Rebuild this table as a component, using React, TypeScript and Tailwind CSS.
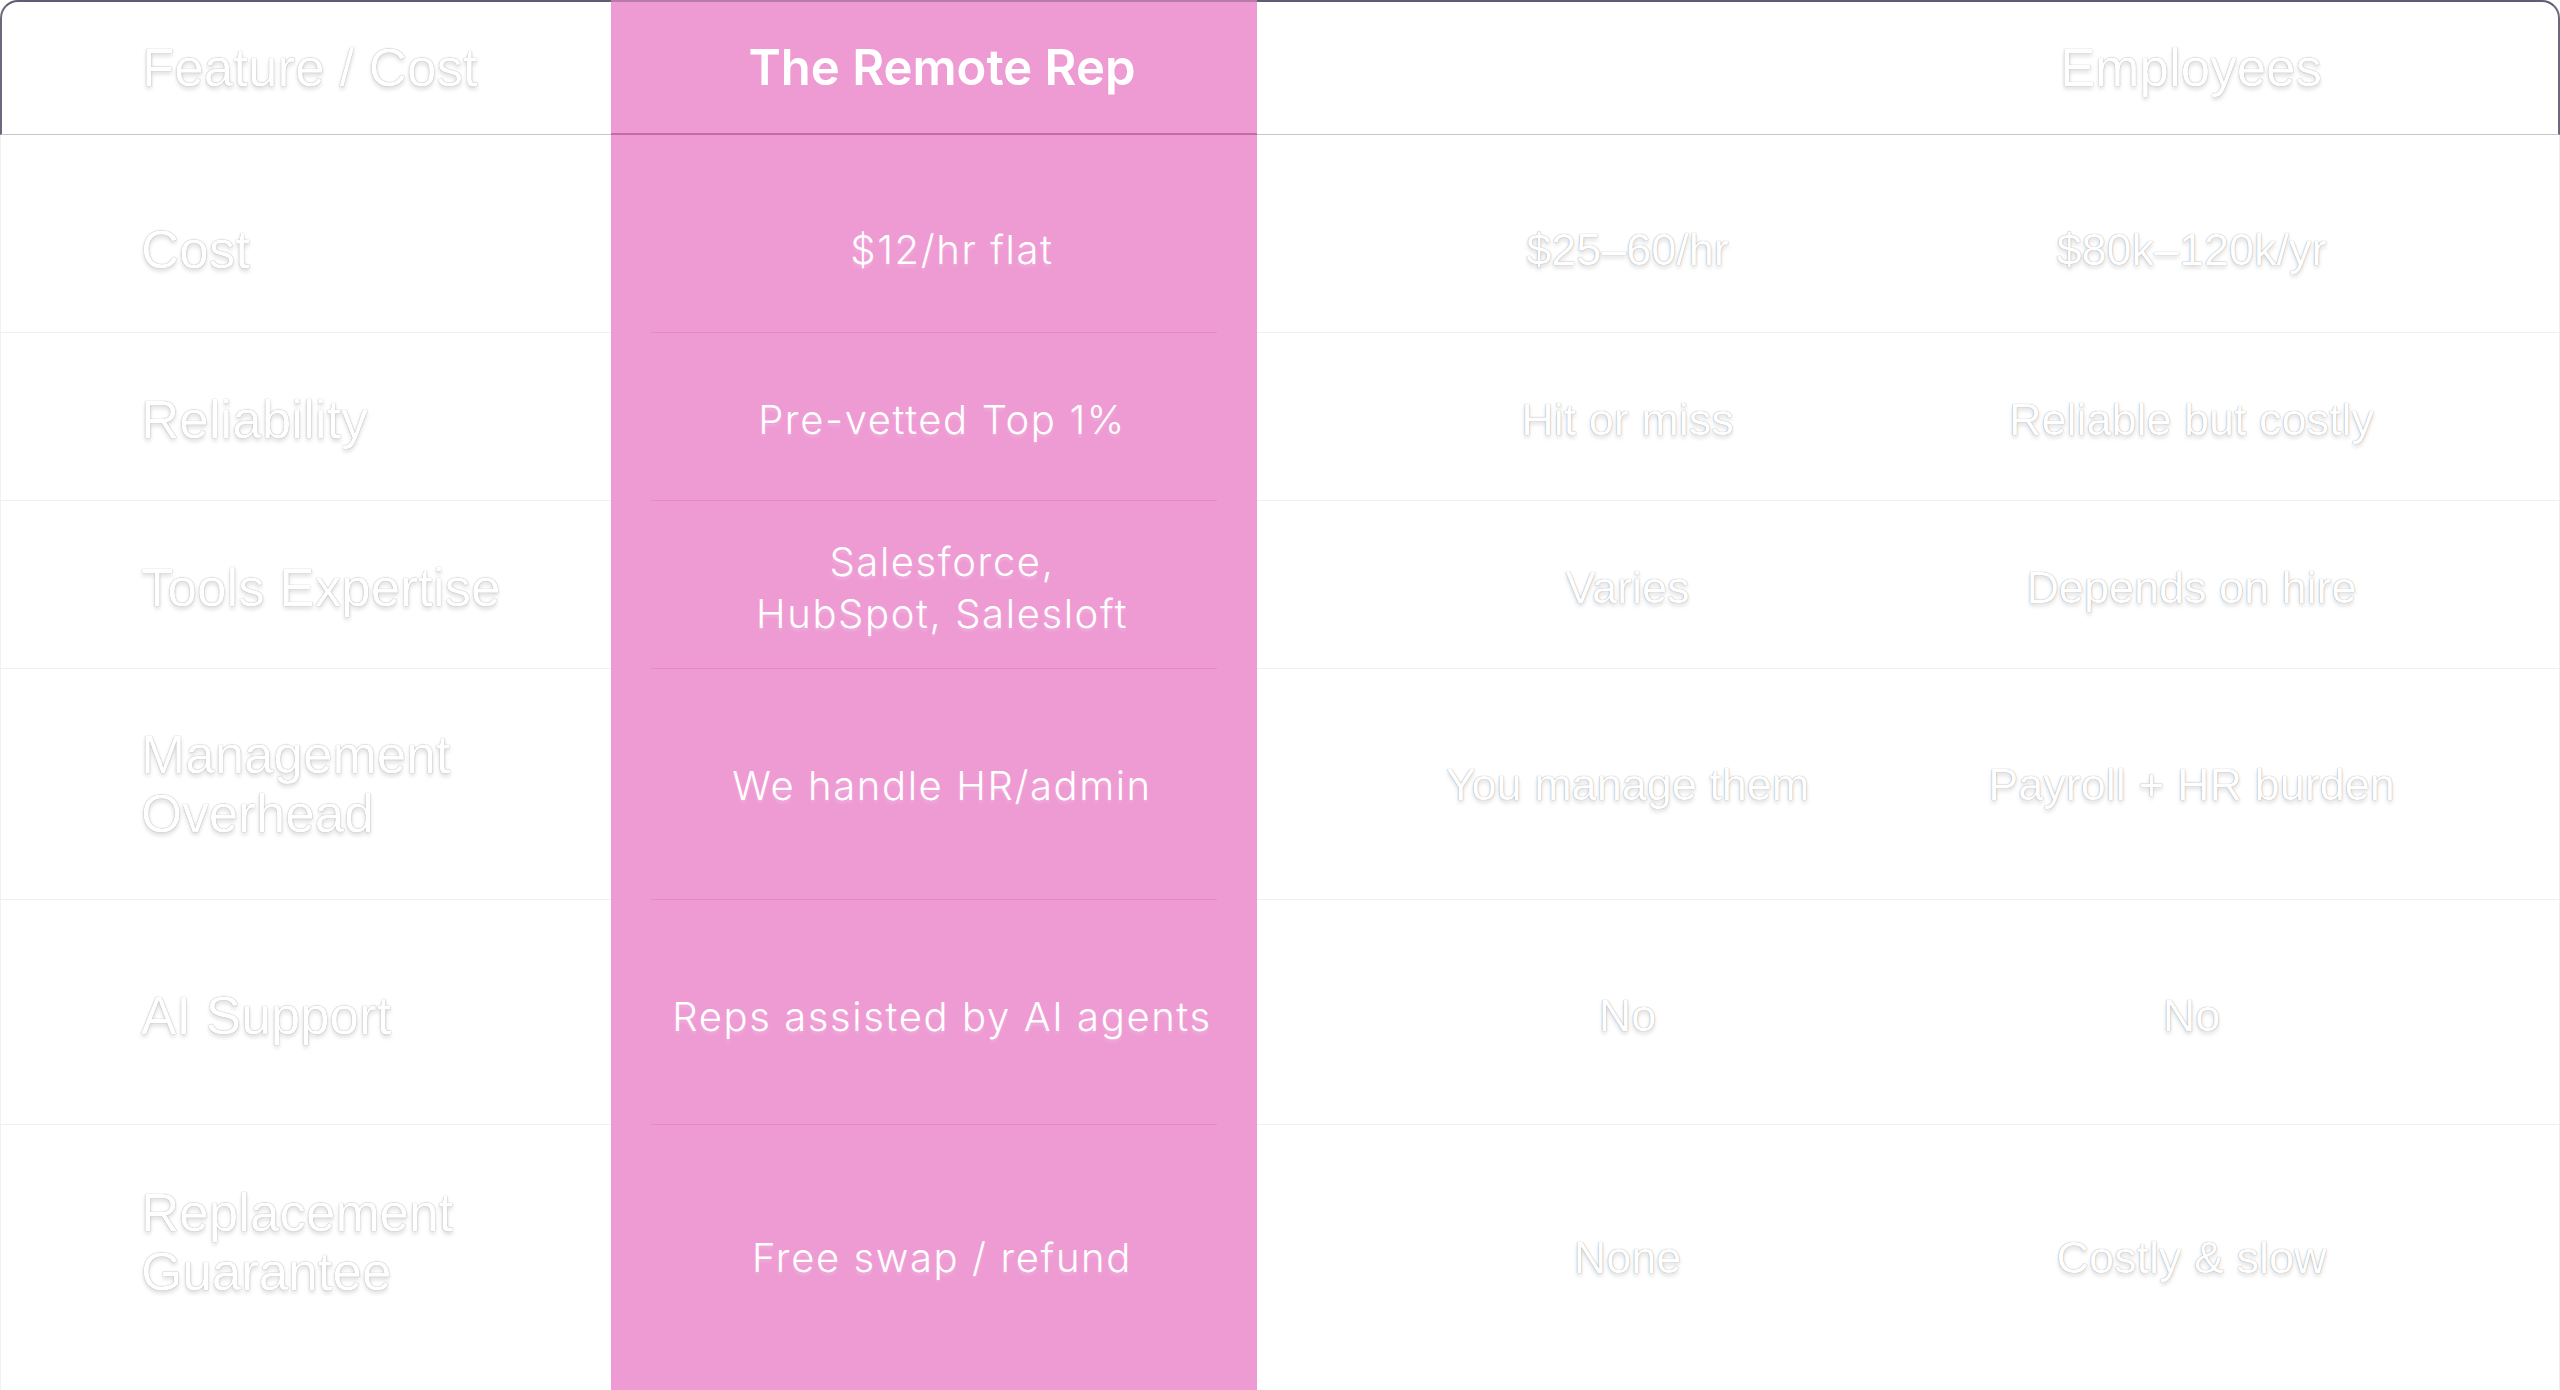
import React from "react";

const ghost =
  "text-white [text-shadow:0_0_1px_rgba(60,60,80,0.6),0_3px_4px_rgba(0,0,0,0.14)]";
const arial = "font-['Liberation_Sans',Arial,sans-serif]";
const inter = "font-['Inter','Noto_Sans',sans-serif]";

type Row = {
  label: React.ReactNode;
  rep: React.ReactNode;
  free: string;
  emp: string;
  h: string;
  pt: string;
  lp: string;
  rx: string;
};

const rows: Row[] = [
  { label: "Cost", rep: "$12/hr flat", free: "$25–60/hr", emp: "$80k–120k/yr", h: "h-[198px]", pt: "pt-[32px]", lp: "pt-[32px]", rx: "ml-[20px]" },
  { label: "Reliability", rep: "Pre-vetted Top 1%", free: "Hit or miss", emp: "Reliable but costly", h: "h-[168px]", pt: "pt-[6px]", lp: "pt-[6px]", rx: "" },
  {
    label: "Tools Expertise",
    rep: (
      <>
        Salesforce,
        <br />
        HubSpot, Salesloft
      </>
    ),
    free: "Varies",
    emp: "Depends on hire",
    h: "h-[168px]",
    pt: "pt-[6px]",
    lp: "pt-[6px]",
    rx: "",
  },
  { label: "Management Overhead", rep: "We handle HR/admin", free: "You manage them", emp: "Payroll + HR burden", h: "h-[231px]", pt: "pt-[2px]", lp: "pt-[0px]", rx: "" },
  { label: "AI Support", rep: "Reps assisted by AI agents", free: "No", emp: "No", h: "h-[225px]", pt: "pt-[8px]", lp: "pt-[6px]", rx: "" },
  { label: "Replacement Guarantee", rep: "Free swap / refund", free: "None", emp: "Costly & slow", h: "h-[265px]", pt: "pt-[0px]", lp: "pb-[32px]", rx: "" },
];

export default function App() {
  return (
    <div className="w-[2560px] h-[1390px] overflow-hidden bg-white">
      <div className="w-[2560px] flex flex-col">
        {/* Header */}
        <div className="grid grid-cols-[611px_646px_741px_562px] h-[135px]">
          <div
            className={`flex items-center pl-[140px] border-t-2 border-l-2 border-b border-t-[#5e5e70] border-l-[#6a6a7c] border-b-[#c9c3cc] rounded-tl-[18px] ${arial} text-[53px] ${ghost}`}
          >
            Feature / Cost
          </div>
          <div
            className={`flex items-center justify-center pl-[16px] bg-[#ee9ad3] border-t-2 border-b-2 border-t-[#b87aa8] border-b-[#c76aa9] ${inter} font-semibold text-[49px] text-white`}
          >
            The Remote Rep
          </div>
          <div className="border-t-2 border-b border-t-[#5e5e70] border-b-[#c9c3cc]" />
          <div
            className={`flex items-center justify-center pr-[174px] border-t-2 border-r-2 border-b border-t-[#5e5e70] border-r-[#6a6a7c] border-b-[#c9c3cc] rounded-tr-[18px] ${arial} text-[53px] ${ghost}`}
          >
            Employees
          </div>
        </div>

        {/* Body */}
        {rows.map((r, i) => (
          <div key={i} className={`grid grid-cols-[611px_646px_741px_562px] ${r.h}`}>
            <div
              className={`flex items-center pl-[140px] pr-[80px] ${r.lp} border-l border-[#f1f1f3] ${
                i < rows.length - 1 ? "border-b" : ""
              } ${arial} text-[53px] leading-[59px] ${ghost}`}
            >
              <span>{r.label}</span>
            </div>
            <div className="relative flex items-center justify-center pl-[16px] bg-[#ee9ad3]">
              <div
                className={`${r.pt} ${r.rx} ${inter} font-light text-[40px] leading-[52px] tracking-[0.04em] text-white text-center [text-shadow:0_3px_3px_rgba(255,255,255,0.18)]`}
              >
                {r.rep}
              </div>
              {i < rows.length - 1 && (
                <div className="absolute bottom-0 left-[40px] right-[40px] h-px bg-[#e48bc5]" />
              )}
            </div>
            <div
              className={`flex items-center justify-center whitespace-nowrap ${r.pt} border-[#f1f1f3] ${
                i < rows.length - 1 ? "border-b" : ""
              } ${arial} text-[45px] ${ghost}`}
            >
              {r.free}
            </div>
            <div
              className={`flex items-center justify-center whitespace-nowrap pr-[174px] ${r.pt} border-r border-[#eeeef1] ${
                i < rows.length - 1 ? "border-b border-b-[#f1f1f3]" : ""
              } ${arial} text-[45px] ${ghost}`}
            >
              {r.emp}
            </div>
          </div>
        ))}
      </div>
    </div>
  );
}
